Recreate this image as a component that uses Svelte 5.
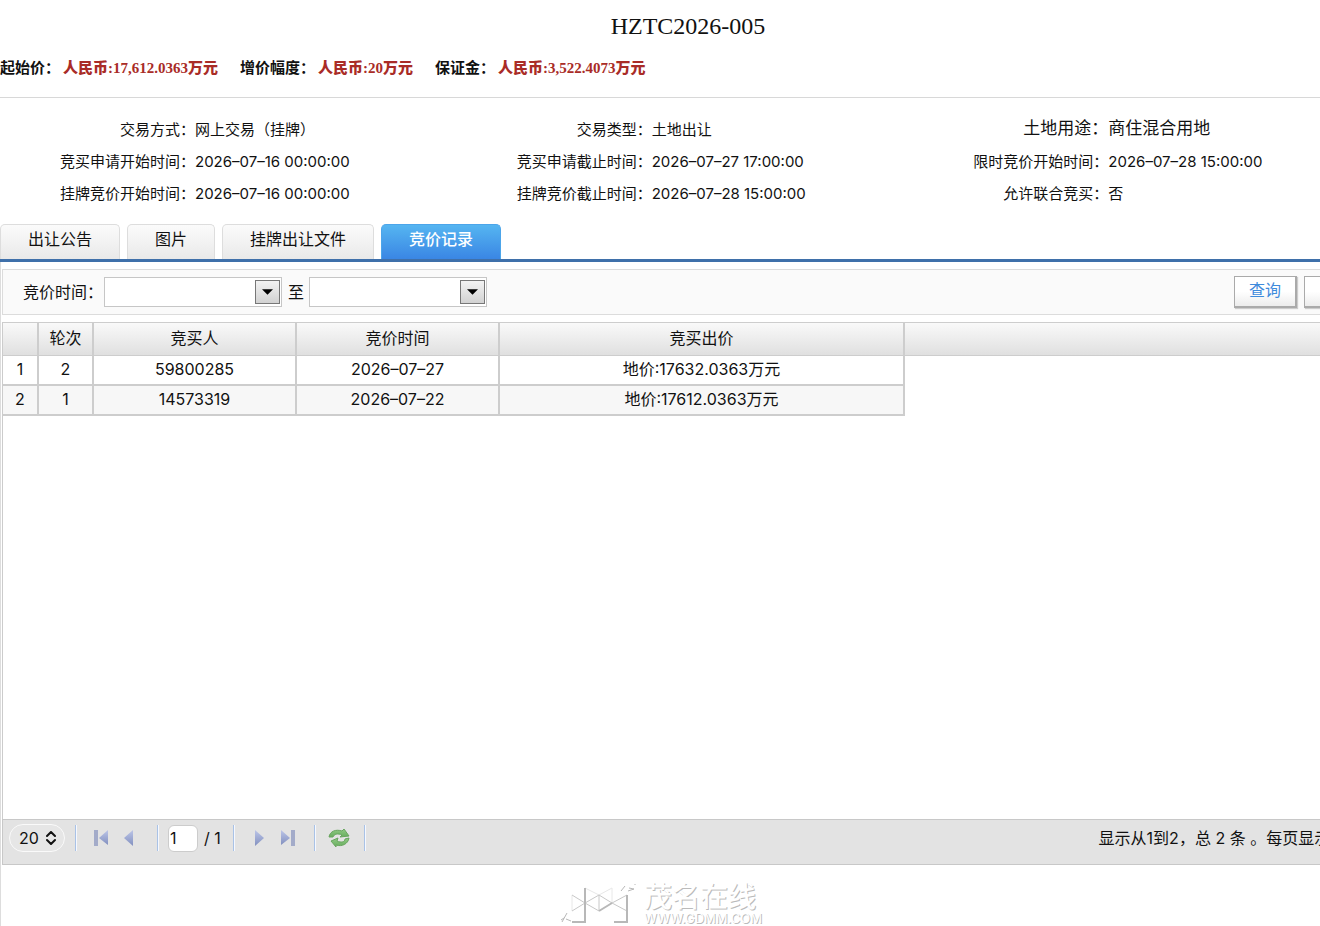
<script>
  const prices = [
    { label: '起始价：', value: '人民币:17,612.0363万元' },
    { label: '增价幅度：', value: '人民币:20万元' },
    { label: '保证金：', value: '人民币:3,522.4073万元' }
  ];

  const infoColumns = [
    [
      { label: '交易方式：', value: '网上交易（挂牌）' },
      { label: '竞买申请开始时间：', value: '2026–07–16 00:00:00' },
      { label: '挂牌竞价开始时间：', value: '2026–07–16 00:00:00' }
    ],
    [
      { label: '交易类型：', value: '土地出让' },
      { label: '竞买申请截止时间：', value: '2026–07–27 17:00:00' },
      { label: '挂牌竞价截止时间：', value: '2026–07–28 15:00:00' }
    ],
    [
      { label: '土地用途：', value: '商住混合用地', large: true },
      { label: '限时竞价开始时间：', value: '2026–07–28 15:00:00' },
      { label: '允许联合竞买：', value: '否' }
    ]
  ];

  const tabs = ['出让公告', '图片', '挂牌出让文件', '竞价记录'];
  let activeTab = $state('竞价记录');

  const records = [
    { round: 2, bidder: '59800285', time: '2026–07–27', price: '地价:17632.0363万元' },
    { round: 1, bidder: '14573319', time: '2026–07–22', price: '地价:17612.0363万元' }
  ];

  let startTime = $state('');
  let endTime = $state('');
  let page = $state('1');
  let pageSize = $state('20');

  function reset() {
    startTime = '';
    endTime = '';
  }
</script>

<div class="viewport">
  <div class="page">
    <h1>HZTC2026-005</h1>

    <div class="prices">
      {#each prices as item}
        <div class="price">
          <span>{item.label}</span>
          <strong>{item.value}</strong>
        </div>
      {/each}
    </div>

    <div class="info">
      {#each infoColumns as column}
        <dl>
          {#each column as row}
            <div class="info-row" class:large={row.large}>
              <dt>{row.label}</dt>
              <dd>{row.value}</dd>
            </div>
          {/each}
        </dl>
      {/each}
    </div>

    <nav class="tabs">
      {#each tabs as tab}
        <button class="tab" class:active={tab === activeTab} onclick={() => (activeTab = tab)}>
          {tab}
        </button>
      {/each}
    </nav>

    <section class="panel">
      <form class="filter" onsubmit={(e) => e.preventDefault()}>
        <label class="from" for="start-time">竞价时间：</label>
        <div class="combo">
          <input id="start-time" type="text" bind:value={startTime} />
          <button type="button" class="drop" aria-label="选择开始时间">
            <svg width="11" height="6" viewBox="0 0 12 6"><path d="M0 0h12L6 6z" /></svg>
          </button>
        </div>
        <label class="to" for="end-time">至</label>
        <div class="combo">
          <input id="end-time" type="text" bind:value={endTime} />
          <button type="button" class="drop" aria-label="选择结束时间">
            <svg width="11" height="6" viewBox="0 0 12 6"><path d="M0 0h12L6 6z" /></svg>
          </button>
        </div>
        <div class="actions">
          <button type="submit" class="action">查询</button>
          <button type="button" class="action" aria-label="重置" onclick={reset}></button>
        </div>
      </form>

      <div class="grid">
        <table>
          <thead>
            <tr>
              <th class="num"></th>
              <th class="round">轮次</th>
              <th class="bidder">竞买人</th>
              <th class="time">竞价时间</th>
              <th class="offer">竞买出价</th>
              <th class="rest"></th>
            </tr>
          </thead>
          <tbody>
            {#each records as record, i}
              <tr>
                <td>{i + 1}</td>
                <td>{record.round}</td>
                <td>{record.bidder}</td>
                <td>{record.time}</td>
                <td>{record.price}</td>
                <td class="rest"></td>
              </tr>
            {/each}
          </tbody>
        </table>
      </div>

      <div class="pager">
        <div class="page-size">
          <select bind:value={pageSize} aria-label="每页条数">
            <option>20</option>
            <option>50</option>
          </select>
          <svg width="10" height="14" viewBox="0 0 10 14" fill="none" stroke="#111" stroke-width="2" stroke-linecap="round" stroke-linejoin="round">
            <path d="M1 5l4-4 4 4M1 9l4 4 4-4" />
          </svg>
        </div>
        <span class="sep"></span>
        <button class="icon first" aria-label="第一页">
          <svg width="16" height="18" viewBox="0 0 16 18">
            <rect x="1" y="1" width="4" height="16" fill="#a3abc9" />
            <path d="M15 1v15L6 9z" fill="url(#arrow)" />
          </svg>
        </button>
        <button class="icon prev" aria-label="上一页">
          <svg width="16" height="18" viewBox="0 0 16 18">
            <path d="M12 1v16L3 9z" fill="url(#arrow)" />
          </svg>
        </button>
        <span class="sep"></span>
        <input class="page-no" type="text" bind:value={page} aria-label="页码" />
        <span class="total">/ 1</span>
        <span class="sep"></span>
        <button class="icon next" aria-label="下一页">
          <svg width="16" height="18" viewBox="0 0 16 18">
            <path d="M4 1v16l9-8z" fill="url(#arrow)" />
          </svg>
        </button>
        <button class="icon last" aria-label="最后一页">
          <svg width="16" height="18" viewBox="0 0 16 18">
            <path d="M1 1v15l9-7z" fill="url(#arrow)" />
            <rect x="11" y="1" width="4" height="16" fill="#a3abc9" />
          </svg>
        </button>
        <span class="sep"></span>
        <button class="icon refresh" aria-label="刷新">
          <svg width="22" height="20" viewBox="0 0 22 20">
            <defs>
              <linearGradient id="arrow" x1="0" y1="0" x2="0" y2="1">
                <stop offset="0" stop-color="#bcc5e8" />
                <stop offset="1" stop-color="#8290bf" />
              </linearGradient>
              <linearGradient id="leaf" x1="0" y1="0" x2="0" y2="1">
                <stop offset="0" stop-color="#8fca84" />
                <stop offset="1" stop-color="#68ad5e" />
              </linearGradient>
            </defs>
            <g fill="url(#leaf)" stroke="#68a55f" stroke-width="1" stroke-linejoin="round">
              <path d="M1 9C2 3 8 1 14 3l2-2 5 7-9 1 2-2C10 5 6 6 5 9z" />
              <path d="M21 10c-1 6-7 9-13 7v2l-5-6 7-3-1 3c4 2 8 1 8-2z" />
            </g>
          </svg>
        </button>
        <span class="sep"></span>
        <p class="summary">显示从1到2，总 2 条 。每页显示 20 条</p>
      </div>
    </section>
  </div>

  <footer class="mark">
    <svg width="77" height="40" viewBox="0 0 77 40" fill="none" stroke="#c8c8c8">
      <path d="M26 4l14 7M53 4l-13 7M13 11v16M53 4v15" stroke="#e8e8e8" />
      <path d="M13 11l13 8 14 8M13 27l13-8 14-8M40 11v16M40 11l13 8 15 8M53 19l15-8" />
      <path d="M40 27l13-8M26 4v34H13M68 11v27H55" stroke="#b8b8b8" stroke-width="2" />
      <path d="M3 38l5-9M7 35l5 2M2 36l3-2M62 7l4-5M69 7l6-2-5-1M76 0v1" stroke="#b8b8b8" />
    </svg>
    <div class="mark-text">
      <span class="mark-name">茂名在线</span>
      <span class="mark-url">WWW.GDMM.COM</span>
    </div>
  </footer>
</div>

<style>
  :global(body) {
    margin: 0;
    background: #fff;
  }

  .viewport {
    display: flex;
    flex-direction: column;
    min-height: 100vh;
    overflow: hidden;
    color: #111;
    font-family: Inter, 'Noto Sans CJK SC', sans-serif;
    font-size: 16px;
  }

  /* content runs past the right edge of the window */
  .page {
    flex: 1;
    display: flex;
    flex-direction: column;
    width: calc(100% + 56px);
  }

  button,
  input,
  select {
    box-sizing: border-box;
    margin: 0;
    padding: 0;
    color: inherit;
    font: inherit;
  }

  h1 {
    margin: 0;
    padding-top: 11px;
    font-family: 'Liberation Serif', serif;
    font-size: 24px;
    font-weight: 400;
    line-height: 30px;
    text-align: center;
  }

  .prices {
    display: flex;
    gap: 22px;
    padding: 15px 0 17px;
    border-bottom: 1px solid #d8d8d8;
    line-height: 24px;
  }

  .price {
    display: flex;
    gap: 3px;
    font-size: 15px;
    font-weight: 700;
    white-space: nowrap;
  }

  .price strong {
    color: #a92c27;
    font-family: 'Liberation Serif', 'Noto Sans CJK SC', serif;
  }

  .info {
    display: grid;
    grid-template-columns: repeat(3, 1fr);
    margin-right: 6px;
    padding: 16px 0 14px;
  }

  .info dl {
    margin: 0;
  }

  .info-row {
    display: flex;
    height: 32px;
    font-size: 15px;
    line-height: 32px;
    white-space: nowrap;
  }

  .info-row.large {
    font-size: 17px;
    line-height: 28px;
  }

  .info dt {
    width: 195px;
    text-align: right;
  }

  .info dd {
    margin: 0;
  }

  .tabs {
    display: flex;
    gap: 7px;
    border-bottom: 3px solid #3f70aa;
  }

  .tab {
    height: 35px;
    padding: 0 27px 7px;
    border: 1px solid #ddd;
    border-bottom: 0;
    border-radius: 5px 5px 0 0;
    background: linear-gradient(#fbfbfb, #e9e9e9);
    line-height: 26px;
    cursor: pointer;
  }

  .tab.active {
    border-color: #4ca5ea;
    background: linear-gradient(#55b5f1, #3a86e4);
    color: #fff;
    font-weight: 500;
  }

  .panel {
    flex: 1;
    display: flex;
    flex-direction: column;
    padding: 7px 0 0 1px;
    border-left: 1px solid #ddd;
  }

  .filter {
    display: flex;
    align-items: center;
    height: 44px;
    padding: 0 8px 0 20px;
    border: 1px solid #dcdcdc;
    background: #fafafa;
    line-height: 22px;
  }

  .from {
    margin-right: 1px;
  }

  .to {
    margin: 0 5px 0 6px;
  }

  .combo {
    display: flex;
    align-items: center;
    box-sizing: border-box;
    width: 178px;
    height: 30px;
    padding-right: 1px;
    border: 1px solid #c6c6c6;
    background: #fff;
  }

  .combo input {
    flex: 1;
    min-width: 0;
    height: 26px;
    padding: 0 4px;
    border: 0;
    background: transparent;
  }

  .drop {
    display: flex;
    align-items: center;
    justify-content: center;
    width: 25px;
    height: 24px;
    border: 1px solid #777;
    background: linear-gradient(#f2f2f2, #d2d2d2);
  }

  .actions {
    display: flex;
    gap: 7px;
    margin-left: auto;
  }

  .action {
    width: 63px;
    height: 32px;
    padding-bottom: 3px;
    border: 1px solid #aaa;
    border-right-width: 2px;
    border-bottom-width: 2px;
    background: linear-gradient(#fff 50%, #ececec);
    box-shadow: 1px 1px 1px #ccc;
    color: #3f8bdc;
    cursor: pointer;
  }

  .grid {
    flex: 1;
    margin-top: 7px;
    border-left: 1px solid #ccc;
  }

  table {
    width: 100%;
    border-collapse: separate;
    border-spacing: 0;
    table-layout: fixed;
  }

  thead tr {
    background: linear-gradient(#fafafa, #dfdfdf);
  }

  th,
  td {
    box-sizing: border-box;
    padding: 0 0 2px;
    border: 0 solid #cdcdcd;
    line-height: 26px;
    text-align: center;
  }

  th {
    height: 34px;
    border-width: 1px 2px 1px 0;
    font-weight: 400;
  }

  td {
    height: 30px;
    border-width: 0 2px 2px 0;
  }

  tbody tr:nth-child(even) td:not(.rest) {
    background: #f7f7f7;
  }

  td.rest {
    border: 0;
    background: #fff;
  }

  .num {
    width: 36px;
  }

  .round {
    width: 55px;
  }

  .bidder,
  .time {
    width: 203px;
  }

  .offer {
    width: 405px;
  }

  .pager {
    display: flex;
    align-items: center;
    height: 36px;
    padding: 0 0 8px 6px;
    border: 1px solid #c8c8c8;
    background: #e3e3e3;
  }

  .page-size {
    position: relative;
    margin-right: 10px;
  }

  .page-size select {
    display: block;
    width: 56px;
    height: 28px;
    padding-left: 9px;
    border: 1px solid #fafafa;
    border-radius: 14px;
    appearance: none;
    background: #e6e6e6;
  }

  .page-size svg {
    position: absolute;
    top: 7px;
    right: 9px;
    pointer-events: none;
  }

  .sep {
    width: 1px;
    height: 26px;
    border-right: 1px solid #f5f8ff;
    background: #a9c2e6;
  }

  .icon {
    display: flex;
    border: 0;
    background: none;
    cursor: pointer;
  }

  .first {
    margin: 0 12px 0 16px;
  }

  .prev {
    margin-right: 20px;
  }

  .page-no {
    width: 30px;
    height: 27px;
    margin: 0 6px 0 9px;
    padding-left: 1px;
    border: 1px solid #ccc;
    border-radius: 6px;
    background: #fff;
  }

  .total {
    width: 29px;
    white-space: nowrap;
  }

  .next {
    margin: 0 13px 0 16px;
  }

  .last {
    margin-right: 18px;
  }

  .refresh {
    margin: 0 14px 0 12px;
  }

  .summary {
    margin: 0 0 0 auto;
    line-height: 22px;
    white-space: nowrap;
  }

  .mark {
    display: flex;
    justify-content: center;
    align-items: center;
    gap: 8px;
    box-sizing: border-box;
    height: 61px;
    padding-top: 16px;
    border-left: 1px solid #ddd;
  }

  .mark-text {
    display: flex;
    flex-direction: column;
    color: #fff;
    font-weight: 500;
    text-shadow: 1px 1px 0 #bbb;
  }

  .mark-name {
    font-size: 28px;
    line-height: 28px;
  }

  .mark-url {
    font-size: 13px;
    font-weight: 400;
    line-height: 14px;
  }
</style>
